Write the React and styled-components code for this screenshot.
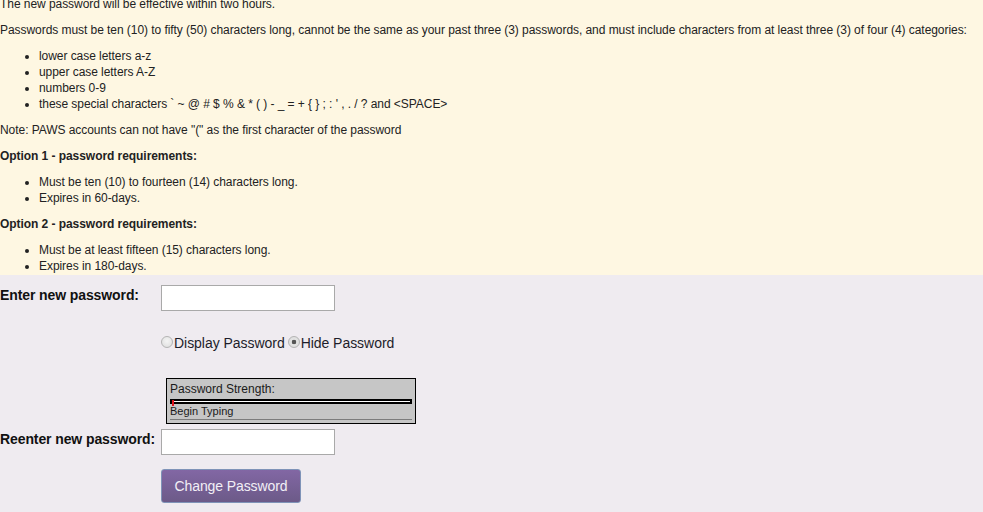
import React from "react";
import styled, { createGlobalStyle } from "styled-components";

const Global = createGlobalStyle`
  html, body { margin: 0; padding: 0; }
  body {
    background: #efebf0;
    font-family: "Liberation Sans", Arial, sans-serif;
    color: #222;
    overflow: hidden;
  }
`;

const Info = styled.section`
  background: #fef7e2;
  padding: 0 0 1px 0;
  font-size: 12px;
  line-height: 16px;
  letter-spacing: -0.055px;
`;

const P = styled.p`
  margin: 10px 0;
  white-space: nowrap;
  &:first-child { margin-top: -4px; }
`;

const Heading = styled.p`
  margin: 10px 0;
  padding-top: 1px;
  line-height: 15px;
  font-weight: bold;
`;

const List = styled.ul`
  margin: 10px 0 0 0;
  padding-left: 39px;
  &:last-child { margin-bottom: 0; }
`;

const Item = styled.li`
  line-height: 16px;
`;

const FormArea = styled.section`
  padding-top: 10px;
  display: flex;
  flex-direction: column;
`;

const Row = styled.div`
  display: grid;
  grid-template-columns: 161px auto;
  align-items: start;
  margin-top: ${(p) => p.$mt || 0}px;
`;

const Label = styled.label`
  grid-column: 1;
  font-size: 14px;
  font-weight: bold;
  line-height: 16px;
  padding-top: 2px;
  letter-spacing: -0.1px;
  color: #111;
  white-space: nowrap;
`;

const Cell = styled.div`
  grid-column: 2;
  margin-left: ${(p) => p.$ml || 0}px;
`;

const TextInput = styled.input`
  box-sizing: border-box;
  width: 174px;
  height: 26px;
  border: 1px solid #a9a9a9;
  background: #fff;
  margin: 0;
  padding: 2px 4px;
  font: 14px "Liberation Sans", Arial, sans-serif;
`;

const RadioRow = styled.div`
  display: flex;
  align-items: center;
  font-size: 14px;
  line-height: 16px;
  letter-spacing: -0.04px;
  color: #1d1d2a;
  white-space: nowrap;
`;

const Radio = styled.input.attrs({ type: "radio" })`
  appearance: none;
  -webkit-appearance: none;
  box-sizing: border-box;
  width: 12px;
  height: 12px;
  margin: 0 1px 0 0;
  border: 1px solid #b4b4b4;
  border-radius: 50%;
  background: radial-gradient(circle at 50% 40%, #f4f4f4 0%, #dcdcdc 100%);
  position: relative;
  top: -1px;
  &:checked {
    background: radial-gradient(circle, #555 0, #555 2px, #e4e4e4 2.6px, #dadada 100%);
  }
`;

const RadioText = styled.span`
  margin-right: 3px;
`;

const StrengthBox = styled.div`
  box-sizing: border-box;
  width: 250px;
  border: 1px solid #000;
  background: #c6c6c6;
  padding: 3px 3px 3px 3px;
  color: #1a1a1a;
`;

const StrengthTitle = styled.div`
  font-size: 12px;
  line-height: 14px;
  margin-bottom: 3px;
`;

const Bar = styled.div`
  position: relative;
  box-sizing: border-box;
  height: 5px;
  border: 2px solid #000;
  background: #fff;
`;

const BarFill = styled.div`
  position: absolute;
  left: 0;
  top: -1px;
  width: 2px;
  height: 6px;
  background: #e0141c;
`;

const StrengthText = styled.div`
  font-size: 11px;
  line-height: 15px;
  border-bottom: 1px solid #7c7c7c;
`;

const Button = styled.button`
  box-sizing: border-box;
  height: 34px;
  width: 140px;
  padding: 0;
  border: 1px solid #7f93b8;
  border-radius: 3px;
  background: linear-gradient(#8267a4, #6c5a88);
  color: #f2eff6;
  font: 14px "Liberation Sans", Arial, sans-serif;
  letter-spacing: -0.1px;
  cursor: pointer;
`;

export default function App() {
  return (
    <>
      <Global />
      <Info>
        <P>The new password will be effective within two hours.</P>
        <P>
          Passwords must be ten (10) to fifty (50) characters long, cannot be the same as your past three (3) passwords, and must include characters from at least three (3) of four (4) categories:
        </P>
        <List>
          <Item>lower case letters a-z</Item>
          <Item>upper case letters A-Z</Item>
          <Item>numbers 0-9</Item>
          <Item>these special characters ` ~ @ # $ % &amp; * ( ) - _ = + {"{"} {"}"} ; : ' , . / ? and &lt;SPACE&gt;</Item>
        </List>
        <P>Note: PAWS accounts can not have "(" as the first character of the password</P>
        <Heading>Option 1 - password requirements:</Heading>
        <List>
          <Item>Must be ten (10) to fourteen (14) characters long.</Item>
          <Item>Expires in 60-days.</Item>
        </List>
        <Heading>Option 2 - password requirements:</Heading>
        <List>
          <Item>Must be at least fifteen (15) characters long.</Item>
          <Item>Expires in 180-days.</Item>
        </List>
      </Info>
      <FormArea>
        <Row>
          <Label htmlFor="pw1">Enter new password:</Label>
          <Cell>
            <TextInput id="pw1" type="password" />
          </Cell>
        </Row>
        <Row $mt={24}>
          <Cell>
            <RadioRow>
              <Radio name="show" />
              <RadioText>Display Password</RadioText>
              <Radio name="show" defaultChecked />
              <RadioText>Hide Password</RadioText>
            </RadioRow>
          </Cell>
        </Row>
        <Row $mt={27}>
          <Cell $ml={5}>
            <StrengthBox>
              <StrengthTitle>Password Strength:</StrengthTitle>
              <Bar>
                <BarFill />
              </Bar>
              <StrengthText>Begin Typing</StrengthText>
            </StrengthBox>
          </Cell>
        </Row>
        <Row $mt={5}>
          <Label htmlFor="pw2">Reenter new password:</Label>
          <Cell>
            <TextInput id="pw2" type="password" />
          </Cell>
        </Row>
        <Row $mt={14}>
          <Cell>
            <Button>Change Password</Button>
          </Cell>
        </Row>
      </FormArea>
    </>
  );
}
